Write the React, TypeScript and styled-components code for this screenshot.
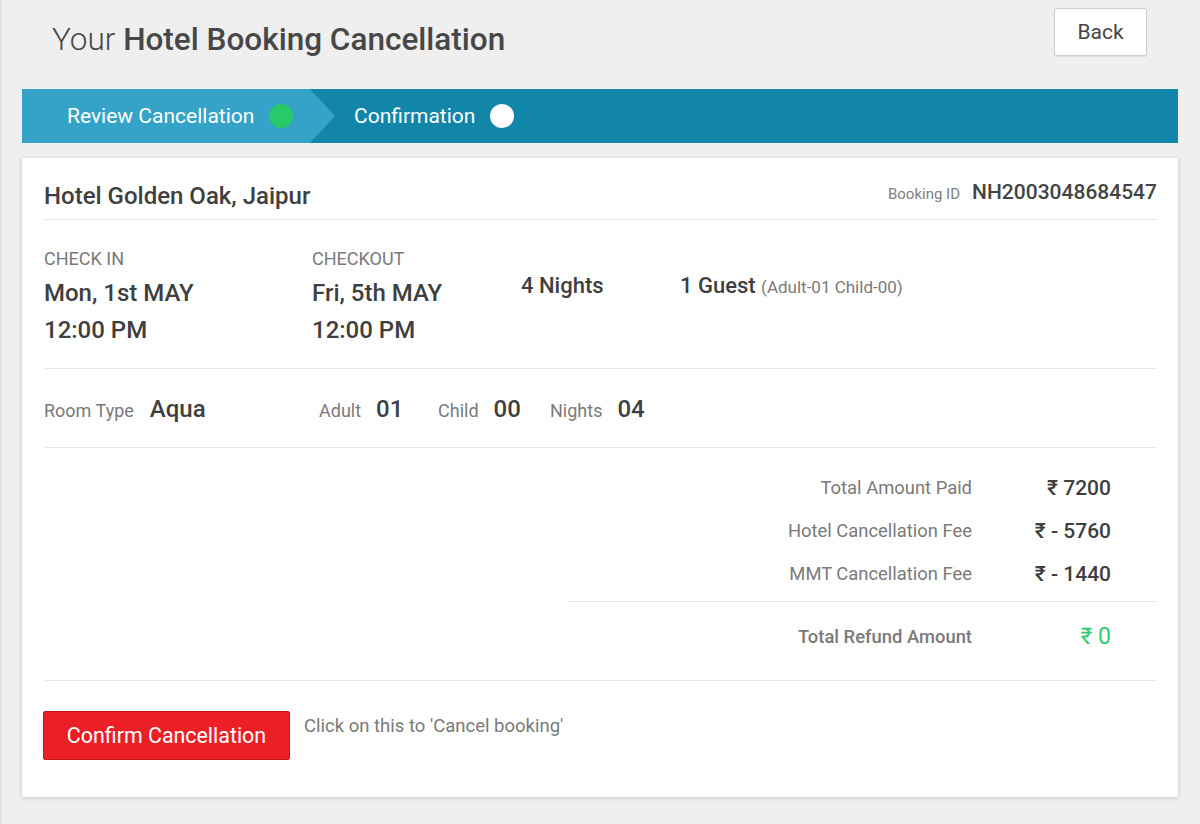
import React from 'react'
import styled, { createGlobalStyle } from 'styled-components'

const GlobalStyle = createGlobalStyle`
  html, body {
    margin: 0;
    padding: 0;
    background: linear-gradient(to right, #e4e4e4 0, #e4e4e4 2px, #efefef 2px);
    font-family: Roboto, 'Noto Sans', 'Liberation Sans', sans-serif;
    color: #434343;
  }
  * { box-sizing: border-box; }
`

const Page = styled.div`
  min-height: 824px;
  padding: 8px 22px 0 22px;
`

const Header = styled.div`
  display: flex;
  align-items: flex-start;
  justify-content: space-between;
  height: 48px;
  padding: 0 31px 0 30px;
`

const Title = styled.h1`
  margin: 14px 0 0;
  font-size: 31.5px;
  line-height: 36px;
  font-weight: 300;
  color: #474747;

  b {
    font-weight: 500;
  }
`

const BackButton = styled.button`
  width: 93px;
  height: 48px;
  background: #fff;
  border: 1px solid #cfcfcf;
  border-radius: 2px;
  font-family: inherit;
  font-size: 21px;
  color: #444;
  box-shadow: 0 1px 1px rgba(0, 0, 0, 0.08);
`

const StepBar = styled.div`
  display: flex;
  align-items: stretch;
  height: 54px;
  margin-top: 33px;
  background: #1186a8;
`

const Step = styled.div<{ $active?: boolean }>`
  display: flex;
  align-items: center;
  gap: 15px;
  color: #fff;
  font-size: 21px;
  ${p =>
    p.$active
      ? `
    width: 313px;
    padding-left: 45px;
    background: #34a3c7;
    clip-path: polygon(0 0, calc(100% - 25px) 0, 100% 50%, calc(100% - 25px) 100%, 0 100%);
  `
      : `
    padding-left: 19px;
  `}
`

const Dot = styled.span<{ $color: string }>`
  width: 24px;
  height: 24px;
  border-radius: 50%;
  background: ${p => p.$color};
`

const Card = styled.div`
  margin-top: 15px;
  background: #fff;
  padding: 0 21px 0 22px;
  box-shadow: 0 1px 4px rgba(0, 0, 0, 0.18);
`

const Section = styled.div<{ $h: number; $pt?: number }>`
  height: ${p => p.$h}px;
  padding-top: ${p => p.$pt ?? 0}px;
  border-bottom: 1px solid #e7e7e7;
`

const HeadRow = styled.div`
  display: flex;
  align-items: center;
  justify-content: space-between;
  height: 62px;
  padding-top: 14px;
  border-bottom: 1px solid #e7e7e7;
`

const HotelName = styled.div`
  font-size: 24px;
  font-weight: 500;
  color: #3f3f3f;
`

const BookingId = styled.div`
  display: flex;
  align-items: baseline;
  gap: 12px;
  font-size: 21px;
  font-weight: 500;
  color: #444;
  margin-top: -8px;

  span {
    font-size: 15px;
    font-weight: 400;
    color: #808080;
  }
`

const DateGrid = styled.div`
  display: grid;
  grid-template-columns: 268px 209px 159px 1fr;
`

const Label = styled.div`
  font-size: 18px;
  color: #7a7a7a;
  line-height: 22px;
`

const DateLabel = styled(Label)`
  margin-bottom: 5px;
`

const BigText = styled.div`
  font-size: 24px;
  font-weight: 500;
  line-height: 37px;
  color: #3f3f3f;
`

const Stat = styled.div`
  padding-top: 25px;
  font-size: 22px;
  font-weight: 500;
  color: #3f3f3f;
  white-space: nowrap;

  small {
    font-size: 17px;
    font-weight: 400;
    color: #7a7a7a;
  }
`

const RoomRow = styled.div`
  display: flex;
  align-items: baseline;
`

const RoomItem = styled.div<{ $w?: number; $gap?: number }>`
  display: flex;
  align-items: baseline;
  gap: ${p => p.$gap ?? 15}px;
  width: ${p => (p.$w ? `${p.$w}px` : 'auto')};
`

const RoomValue = styled.span`
  font-size: 24px;
  font-weight: 500;
  color: #3f3f3f;
`

const Amounts = styled.div`
  width: 589px;
  margin-left: auto;
`

const AmountRow = styled.div<{ $total?: boolean }>`
  display: grid;
  grid-template-columns: 404px 139px;
  align-items: center;
  height: 43px;
  ${p => (p.$total ? 'margin-top: 12px; height: 44px;' : '')}
`

const AmountLabel = styled.div<{ $bold?: boolean }>`
  text-align: right;
  font-size: 18.4px;
  font-weight: ${p => (p.$bold ? 500 : 400)};
  color: #7a7a7a;
`

const AmountValue = styled.div<{ $green?: boolean }>`
  text-align: right;
  font-size: ${p => (p.$green ? 23 : 21)}px;
  font-weight: ${p => (p.$green ? 400 : 500)};
  color: ${p => (p.$green ? '#2ecc71' : '#3f3f3f')};
`

const AmountDivider = styled.div`
  height: 1px;
  background: #e7e7e7;
  margin-top: 6px;
`

const Footer = styled.div`
  display: flex;
  align-items: flex-start;
  gap: 14px;
  height: 116px;
  padding-top: 30px;
`

const ConfirmButton = styled.button`
  width: 247px;
  height: 49px;
  margin-left: -1px;
  background: #ec1f27;
  border: 1px solid #c5151c;
  border-radius: 2px;
  color: #fff;
  font-family: inherit;
  font-size: 21.4px;
`

const Hint = styled.div`
  font-size: 18.5px;
  color: #7a7a7a;
  padding-top: 4px;
`

const amounts = [
  { label: 'Total Amount Paid', value: '₹ 7200' },
  { label: 'Hotel Cancellation Fee', value: '₹ - 5760' },
  { label: 'MMT Cancellation Fee', value: '₹ - 1440' },
]

export default function App() {
  return (
    <>
      <GlobalStyle />
      <Page>
        <Header>
          <Title>
            Your <b>Hotel Booking Cancellation</b>
          </Title>
          <BackButton>Back</BackButton>
        </Header>

        <StepBar>
          <Step $active>
            Review Cancellation <Dot $color='#27c96b' />
          </Step>
          <Step>
            Confirmation <Dot $color='#fff' />
          </Step>
        </StepBar>

        <Card>
          <HeadRow>
            <HotelName>Hotel Golden Oak, Jaipur</HotelName>
            <BookingId>
              <span>Booking ID</span>NH2003048684547
            </BookingId>
          </HeadRow>

          <Section $h={149} $pt={28}>
            <DateGrid>
              <div>
                <DateLabel>CHECK IN</DateLabel>
                <BigText>Mon, 1st MAY</BigText>
                <BigText>12:00 PM</BigText>
              </div>
              <div>
                <DateLabel>CHECKOUT</DateLabel>
                <BigText>Fri, 5th MAY</BigText>
                <BigText>12:00 PM</BigText>
              </div>
              <Stat>4 Nights</Stat>
              <Stat>
                1 Guest <small>(Adult-01 Child-00)</small>
              </Stat>
            </DateGrid>
          </Section>

          <Section $h={79} $pt={26}>
            <RoomRow>
              <RoomItem $w={275} $gap={16}>
                <Label as='span'>Room Type</Label>
                <RoomValue>Aqua</RoomValue>
              </RoomItem>
              <RoomItem $w={119}>
                <Label as='span'>Adult</Label>
                <RoomValue>01</RoomValue>
              </RoomItem>
              <RoomItem $w={112}>
                <Label as='span'>Child</Label>
                <RoomValue>00</RoomValue>
              </RoomItem>
              <RoomItem>
                <Label as='span'>Nights</Label>
                <RoomValue>04</RoomValue>
              </RoomItem>
            </RoomRow>
          </Section>

          <Section $h={233} $pt={18}>
            <Amounts>
              {amounts.map(a => (
                <AmountRow key={a.label}>
                  <AmountLabel>{a.label}</AmountLabel>
                  <AmountValue>{a.value}</AmountValue>
                </AmountRow>
              ))}
              <AmountDivider />
              <AmountRow $total>
                <AmountLabel $bold>Total Refund Amount</AmountLabel>
                <AmountValue $green>₹ 0</AmountValue>
              </AmountRow>
            </Amounts>
          </Section>

          <Footer>
            <ConfirmButton>Confirm Cancellation</ConfirmButton>
            <Hint>Click on this to 'Cancel booking'</Hint>
          </Footer>
        </Card>
      </Page>
    </>
  )
}
